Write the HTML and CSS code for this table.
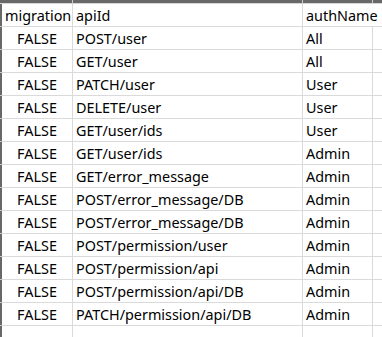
FILE: index.html
```html
<!DOCTYPE html>
<html>
<head>
<meta charset="utf-8">
<link rel="stylesheet" href="styles.css">
</head>
<body>
<div class="sheet">
  <div class="corner"></div><div class="colhead"></div><div class="colhead"></div><div class="colhead"></div><div class="colhead last"></div>

  <div class="rowhead"></div><div class="cell">migration</div><div class="cell">apiId</div><div class="cell open">authName</div><div class="cell tail"></div>

  <div class="rowhead"></div><div class="cell c">FALSE</div><div class="cell">POST/user</div><div class="cell">All</div><div class="cell tail"></div>
  <div class="rowhead"></div><div class="cell c">FALSE</div><div class="cell">GET/user</div><div class="cell">All</div><div class="cell tail"></div>
  <div class="rowhead"></div><div class="cell c">FALSE</div><div class="cell">PATCH/user</div><div class="cell">User</div><div class="cell tail"></div>
  <div class="rowhead"></div><div class="cell c">FALSE</div><div class="cell">DELETE/user</div><div class="cell">User</div><div class="cell tail"></div>
  <div class="rowhead"></div><div class="cell c">FALSE</div><div class="cell">GET/user/ids</div><div class="cell">User</div><div class="cell tail"></div>
  <div class="rowhead"></div><div class="cell c">FALSE</div><div class="cell">GET/user/ids</div><div class="cell">Admin</div><div class="cell tail"></div>
  <div class="rowhead"></div><div class="cell c">FALSE</div><div class="cell">GET/error_message</div><div class="cell">Admin</div><div class="cell tail"></div>
  <div class="rowhead"></div><div class="cell c">FALSE</div><div class="cell">POST/error_message/DB</div><div class="cell">Admin</div><div class="cell tail"></div>
  <div class="rowhead"></div><div class="cell c">FALSE</div><div class="cell">POST/error_message/DB</div><div class="cell">Admin</div><div class="cell tail"></div>
  <div class="rowhead"></div><div class="cell c">FALSE</div><div class="cell">POST/permission/user</div><div class="cell">Admin</div><div class="cell tail"></div>
  <div class="rowhead"></div><div class="cell c">FALSE</div><div class="cell">POST/permission/api</div><div class="cell">Admin</div><div class="cell tail"></div>
  <div class="rowhead"></div><div class="cell c">FALSE</div><div class="cell">POST/permission/api/DB</div><div class="cell">Admin</div><div class="cell tail"></div>
  <div class="rowhead"></div><div class="cell c">FALSE</div><div class="cell">PATCH/permission/api/DB</div><div class="cell">Admin</div><div class="cell tail"></div>

  <div class="rowhead"></div><div class="cell"></div><div class="cell"></div><div class="cell"></div><div class="cell tail"></div>
</div>
</body>
</html>
```
FILE: styles.css
```css
* { box-sizing: border-box; }
html, body { margin: 0; padding: 0; background: #ffffff; }
body { width: 382px; height: 337px; overflow: hidden; }

.sheet {
  display: grid;
  grid-template-columns: 2px 71px 230px 70px 1fr;
  grid-template-rows: 4px 23px repeat(14, 23px);
  font-family: "Noto Sans", "Segoe UI", sans-serif;
  font-size: 14.4px;
  color: #000;
}

.corner, .colhead {
  background: #686868;
  border-bottom: 1px solid #d6d6d6;
}
.colhead { border-right: 1px solid #c9c9c9; }
.colhead.last { border-right: none; }

.rowhead {
  background: #686868;
  border-bottom: 1px solid #c9c9c9;
}

.cell {
  border-right: 1px solid #dadada;
  border-bottom: 1px solid #dadada;
  padding: 1px 0 0 3px;
  line-height: 22px;
  white-space: nowrap;
  overflow: visible;
}
.cell.c { text-align: center; padding: 1px 0 0 0; }
.cell.open { border-right: none; }
.cell.tail { border-right: none; }
```
